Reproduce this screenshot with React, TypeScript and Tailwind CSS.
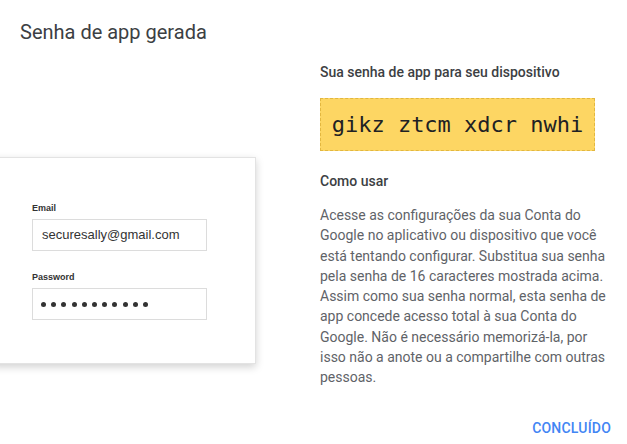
import { type FC } from 'react';

const roboto = { fontFamily: 'Roboto, "Noto Sans", sans-serif' };

const LoginCard: FC = () => (
  <div
    className="-ml-2 mt-[111px] h-[207px] w-[264px] border border-[#e3e3e3] bg-white pl-[39px] pt-[44px] shadow-[0_3px_8px_rgba(0,0,0,0.18)]"
    style={{ fontFamily: '"Liberation Sans", Arial, sans-serif' }}
  >
    <label className="block text-[9px] font-bold leading-[12px] text-[#333]">Email</label>
    <div className="mt-[5px] flex h-[32px] w-[175px] items-center border border-[#dcdcdc] pl-[9px] text-[13px] text-[#333]">
      securesally@gmail.com
    </div>
    <label className="mt-[20px] block text-[9px] font-bold leading-[12px] text-[#333]">
      Password
    </label>
    <div className="mt-[5px] flex h-[32px] w-[175px] items-center gap-[5.2px] border border-[#dcdcdc] pl-[8px]">
      {Array.from({ length: 11 }).map((_, i) => (
        <span key={i} className="h-[5px] w-[5px] rounded-full bg-[#333]" />
      ))}
    </div>
  </div>
);

export default function App() {
  return (
    <div className="flex h-[444px] w-[627px] flex-col overflow-hidden bg-white" style={roboto}>
      <h1 className="pl-5 pt-[18px] text-[20px] leading-[28px] text-[#3c4043]">
        Senha de app gerada
      </h1>

      <div className="flex">
        <div className="w-[320px]">
          <LoginCard />
        </div>

        <div className="mt-4 w-[292px]">
          <p className="text-[14px] font-medium leading-5 text-[#3c4043]">
            Sua senha de app para seu dispositivo
          </p>
          <div className="mt-4 flex h-[53px] w-[275px] items-center justify-center border border-dashed border-[#e2b740] bg-[#fdd663]">
            <span
              className="text-[22px] text-[#202124]"
              style={{ fontFamily: '"DejaVu Sans Mono", "Liberation Mono", monospace' }}
            >
              gikz ztcm xdcr nwhi
            </span>
          </div>
          <p className="mt-5 text-[14px] font-medium leading-5 text-[#3c4043]">Como usar</p>
          <p className="mt-[14px] text-[14px] leading-[20.25px] text-[#5f6368]">
            Acesse as configurações da sua Conta do Google no aplicativo ou dispositivo que
            você está tentando configurar. Substitua sua senha pela senha de 16 caracteres
            mostrada acima. Assim como sua senha normal, esta senha de app concede acesso
            total à sua Conta do Google. Não é necessário memorizá-la, por isso não a anote
            ou a compartilhe com outras pessoas.
          </p>
        </div>
      </div>

      <div className="mt-auto flex justify-end pb-[6px] pr-4">
        <button
          type="button"
          className="text-[14px] font-medium uppercase leading-5 tracking-[0.2px] text-[#4285f4]"
        >
          Concluído
        </button>
      </div>
    </div>
  );
}
